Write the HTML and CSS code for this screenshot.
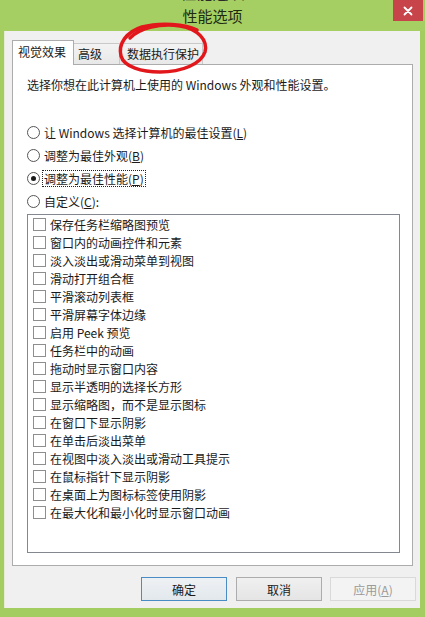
FILE: index.html
```html
<!DOCTYPE html>
<html lang="zh-CN">
<head>
<meta charset="utf-8">
<title>性能选项</title>
<link rel="stylesheet" href="styles.css">
</head>
<body>
<div class="window">
  <div class="titlebar">
    <span class="ghost">性能选项</span>
    <div class="title">性能选项</div>
    <button class="close" aria-label="关闭">
      <svg width="10" height="10" viewBox="0 0 10 10"><path d="M1.5 1.5 L8.5 8.5 M8.5 1.5 L1.5 8.5" stroke="#fff" stroke-width="1.8" stroke-linecap="round"/></svg>
    </button>
  </div>
  <div class="client">
    <div class="tabs">
      <div class="tab active t1">视觉效果</div>
      <div class="tab t2">高级</div>
      <div class="tab t3">数据执行保护</div>
    </div>
    <div class="panel">
      <p class="desc">选择你想在此计算机上使用的 Windows 外观和性能设置。</p>
      <div class="radios">
        <div class="radio"><span class="circle"></span><span class="lbl">让 Windows 选择计算机的最佳设置(<u>L</u>)</span></div>
        <div class="radio"><span class="circle"></span><span class="lbl">调整为最佳外观(<u>B</u>)</span></div>
        <div class="radio"><span class="circle on"></span><span class="lbl focus">调整为最佳性能(<u>P</u>)</span></div>
        <div class="radio"><span class="circle"></span><span class="lbl">自定义(<u>C</u>):</span></div>
      </div>
      <div class="list">
        <div class="item"><span class="box"></span>保存任务栏缩略图预览</div>
        <div class="item"><span class="box"></span>窗口内的动画控件和元素</div>
        <div class="item"><span class="box"></span>淡入淡出或滑动菜单到视图</div>
        <div class="item"><span class="box"></span>滑动打开组合框</div>
        <div class="item"><span class="box"></span>平滑滚动列表框</div>
        <div class="item"><span class="box"></span>平滑屏幕字体边缘</div>
        <div class="item"><span class="box"></span>启用 Peek 预览</div>
        <div class="item"><span class="box"></span>任务栏中的动画</div>
        <div class="item"><span class="box"></span>拖动时显示窗口内容</div>
        <div class="item"><span class="box"></span>显示半透明的选择长方形</div>
        <div class="item"><span class="box"></span>显示缩略图，而不是显示图标</div>
        <div class="item"><span class="box"></span>在窗口下显示阴影</div>
        <div class="item"><span class="box"></span>在单击后淡出菜单</div>
        <div class="item"><span class="box"></span>在视图中淡入淡出或滑动工具提示</div>
        <div class="item"><span class="box"></span>在鼠标指针下显示阴影</div>
        <div class="item"><span class="box"></span>在桌面上为图标标签使用阴影</div>
        <div class="item"><span class="box"></span>在最大化和最小化时显示窗口动画</div>
      </div>
    </div>
    <div class="buttons">
      <button class="btn ok">确定</button>
      <button class="btn">取消</button>
      <button class="btn apply" disabled>应用(<u>A</u>)</button>
    </div>
  </div>
  <svg class="scribble" width="425" height="90" viewBox="0 0 425 90">
    <path d="M197 30 C186 24 160 22 142 27 C126 32 118 44 121 56 C124 67 142 72 160 72 C182 72 201 64 205 52 C208 40 198 29 180 26 C160 23 140 28 130 38" fill="none" stroke="#e2171c" stroke-width="3.5" stroke-linecap="round" stroke-linejoin="round"/>
  </svg>
</div>
</body>
</html>
```

FILE: styles.css
```css
html, body {
  margin: 0;
  padding: 0;
}

body {
  font-family: "Noto Sans CJK SC", "Microsoft YaHei", "Noto Sans", sans-serif;
  font-size: 12px;
  color: #1a1a1a;
  background: #a3cd60;
}

.window {
  position: relative;
  width: 425px;
  height: 617px;
  background: #a3cd60;
  display: flex;
  flex-direction: column;
  overflow: hidden;
}

.titlebar {
  position: relative;
  flex: none;
  height: 31px;
  display: grid;
  grid-template-columns: 1fr auto 1fr;
  background: #a5cf63;
  overflow: hidden;
}

.ghost {
  position: absolute;
  top: -18px;
  left: 0;
  right: 0;
  text-align: center;
  font-size: 16px;
  line-height: 20px;
  color: #2a2a2a;
}

.title {
  grid-column: 2;
  font-size: 15px;
  line-height: 31px;
  color: #1e2a12;
}

.close {
  grid-column: 3;
  justify-self: end;
  align-self: start;
  width: 30px;
  height: 21px;
  margin-right: 2px;
  padding: 0;
  border: 0;
  background: #c8444b;
  display: flex;
  align-items: center;
  justify-content: center;
}

.client {
  flex: none;
  margin: 0 5px 0 4px;
  height: 577px;
  box-sizing: border-box;
  background: #f0f0f0;
  border-left: 1px solid #e4ecd8;
  padding: 9px 7px 0 7px;
  display: flex;
  flex-direction: column;
}

.tabs {
  display: flex;
  align-items: flex-end;
  height: 24px;
}

.tab {
  box-sizing: border-box;
  height: 21px;
  border: 1px solid #c9c9c9;
  border-bottom: 0;
  background: linear-gradient(#f3f3f3, #e8e8e8);
  padding-left: 4px;
  line-height: 20px;
  white-space: nowrap;
}

.tab.active {
  position: relative;
  z-index: 1;
  height: 25px;
  margin-bottom: -1px;
  background: #fff;
  border-color: #acacac;
  padding-left: 5px;
  line-height: 22px;
}

.t1 { width: 62px; }
.t2 { width: 46px; border-left: 0; }
.t3 { width: 83px; border-left: 0; padding-left: 7px; }

.panel {
  box-sizing: border-box;
  height: 502px;
  background: #fff;
  border: 1px solid #acacac;
  padding: 11px 12px 0 14px;
}

.desc {
  margin: 0;
  line-height: 17px;
}

.radios {
  margin-top: 28px;
}

.radio {
  display: flex;
  align-items: center;
  height: 23px;
}

.circle {
  box-sizing: border-box;
  width: 13px;
  height: 13px;
  border: 1px solid #555;
  border-radius: 50%;
  background: #fff;
  margin-right: 2px;
  display: flex;
  align-items: center;
  justify-content: center;
  flex: none;
}

.circle.on::after {
  content: "";
  width: 5px;
  height: 5px;
  border-radius: 50%;
  background: #1a1a1a;
}

.lbl {
  border: 1px dotted transparent;
  padding: 0 1px;
  line-height: 15px;
}

.lbl.focus {
  border-color: #222;
}

.list {
  margin-top: 1px;
  box-sizing: border-box;
  height: 339px;
  border: 1px solid #828790;
  background: #fff;
}

.item {
  height: 18px;
  display: flex;
  align-items: center;
  padding-left: 5px;
  white-space: nowrap;
}

.box {
  box-sizing: border-box;
  width: 13px;
  height: 13px;
  border: 1px solid #8e8e8e;
  background: #fff;
  margin-right: 4px;
  flex: none;
}

.buttons {
  display: flex;
  justify-content: flex-end;
  gap: 8px;
  margin-top: 11px;
  margin-right: -3px;
}

.btn {
  box-sizing: border-box;
  width: 86px;
  height: 24px;
  padding: 0;
  font: inherit;
  font-size: 12px;
  color: #1a1a1a;
  border: 1px solid #acacac;
  background: linear-gradient(#f0f0f0, #e5e5e5);
}

.ok {
  margin-right: 1px;
  border-color: #4a8cc4;
  background: linear-gradient(#eef1f4, #e3e8ed);
}

.apply {
  color: #9a9a9a;
  border-color: #d9d9d9;
  background: #f3f3f3;
}

.scribble {
  position: absolute;
  top: 0;
  left: 0;
  pointer-events: none;
}
```
